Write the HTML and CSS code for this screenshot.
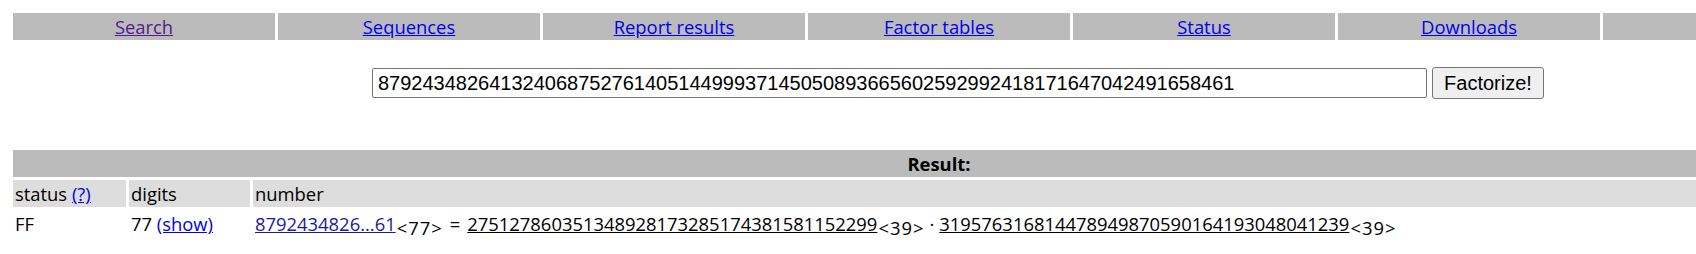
FILE: index.html
```html
<!DOCTYPE html>
<html lang="en">
<head>
    <meta charset="UTF-8">
    <title>factordb.com</title>
    <link rel="stylesheet" href="styles.css">
</head>
<body>
    <div id="page">
        <!-- menu -->
        <div class="menu">
            <div class="menu-cell"><a class="visited" href="#">Search</a></div>
            <div class="menu-cell"><a href="#">Sequences</a></div>
            <div class="menu-cell"><a href="#">Report results</a></div>
            <div class="menu-cell"><a href="#">Factor tables</a></div>
            <div class="menu-cell"><a href="#">Status</a></div>
            <div class="menu-cell"><a href="#">Downloads</a></div>
            <div class="menu-cell"><a href="#">Login</a></div>
        </div>

        <form class="search" onsubmit="return false;">
            <input class="query" type="text" name="query" value="87924348264132406875276140514499937145050893665602592992418171647042491658461">
            <button class="go" type="submit">Factorize!</button>
        </form>

        <!-- result table -->
        <div class="result">
            <div class="result-title">Result:</div>
            <div class="row head">
                <div class="cell">status <a href="#">(?)</a></div>
                <div class="cell">digits</div>
                <div class="cell">number</div>
            </div>
            <div class="row">
                <div class="cell">FF</div>
                <div class="cell">77 <a href="#">(show)</a></div>
                <div class="cell"><a class="num" href="#">8792434826...61</a><sub>&lt;77&gt;</sub><span class="op">=</span><a class="factor" href="#">275127860351348928173285174381581152299</a><sub>&lt;39&gt;</sub><span class="op dot">&middot;</span><a class="factor" href="#">319576316814478949870590164193048041239</a><sub>&lt;39&gt;</sub></div>
            </div>
        </div>
    </div>
</body>
</html>
```

FILE: styles.css
```css
html, body {
    overflow: hidden;
}

body {
    margin: 0;
    font-family: "Open Sans", "Noto Sans", sans-serif;
    font-size: 18.4px;
    color: #000;
    background: #fff;
}

#page {
    width: 1852px;
    padding: 13px 0 0 13px;
}

a {
    color: #0000ee;
}

a.visited {
    color: #551a8b;
}

/* menu */
.menu {
    display: grid;
    grid-template-columns: repeat(7, 1fr);
    gap: 3px;
}

.menu-cell {
    background-color: #bbbbbb;
    height: 27px;
    line-height: 27px;
    text-align: center;
}

/* search form */
.search {
    display: flex;
    align-items: center;
    gap: 5px;
    margin: 27px 0 0 359px;
    height: 32px;
}

.query {
    box-sizing: border-box;
    width: 1055px;
    height: 30px;
    margin: 0;
    padding: 1px 5px;
    border: 1px solid #767676;
    border-radius: 2px;
    font-family: "Liberation Sans", Arial, sans-serif;
    font-size: 20px;
    color: #000;
}

.go {
    box-sizing: border-box;
    width: 112px;
    height: 32px;
    margin: 0;
    padding: 0;
    border: 1px solid #767676;
    border-radius: 3px;
    background-color: #efefef;
    font-family: "Liberation Sans", Arial, sans-serif;
    font-size: 20px;
    color: #000;
}

/* result */
.result {
    margin-top: 51px;
    display: flex;
    flex-direction: column;
    gap: 3px;
}

.result-title {
    background-color: #bbbbbb;
    height: 27px;
    line-height: 27px;
    text-align: center;
    font-weight: bold;
}

.row {
    display: grid;
    grid-template-columns: 113px 121px 1fr;
    gap: 3px;
}

.cell {
    height: 27px;
    line-height: 27px;
    padding-left: 2px;
    white-space: nowrap;
}

.head .cell {
    background-color: #dddddd;
}

a.num {
    color: #1a1aa6;
}

a.factor {
    color: #000;
}

.op {
    padding: 0 7px;
}

.dot {
    padding: 0 5px;
}

sub {
    font-size: 1em;
    letter-spacing: 1px;
    padding-left: 1px;
    vertical-align: -4px;
    line-height: 1;
}
```
